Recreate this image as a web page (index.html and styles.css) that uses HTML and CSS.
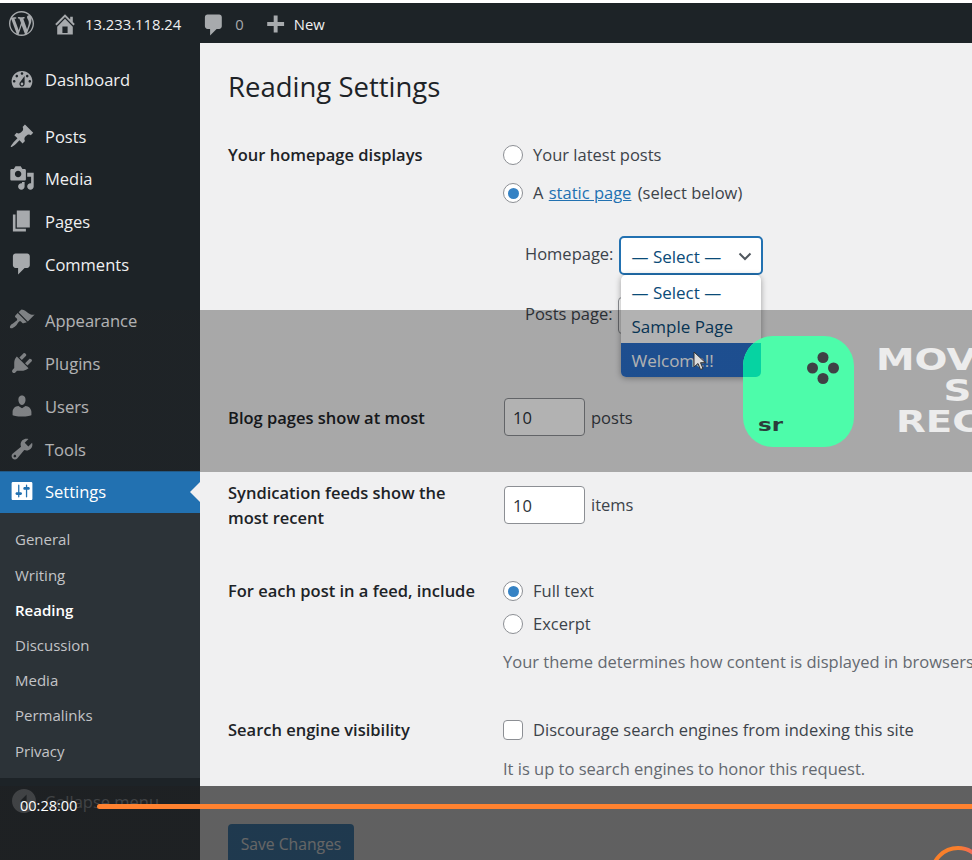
FILE: index.html
```html
<!DOCTYPE html>
<html lang="en">
<head>
    <meta charset="UTF-8">
    <meta name="viewport" content="width=device-width, initial-scale=1.0">
    <title>Reading Settings</title>
    <link rel="stylesheet" href="styles.css">
</head>
<body>
<div id="screen">
    <div id="adminbar">
        <svg class="bar-logo" viewBox="0 0 20 20"><path d="M20 10c0-5.51-4.49-10-10-10C4.48 0 0 4.49 0 10c0 5.52 4.48 10 10 10 5.51 0 10-4.48 10-10zM7.78 15.37L4.37 6.22c.55-.02 1.17-.08 1.17-.08.5-.06.44-1.13-.06-1.11 0 0-1.45.11-2.37.11-.18 0-.37 0-.58-.01C4.12 2.69 6.87 1.11 10 1.11c2.33 0 4.45.87 6.05 2.34-.68-.11-1.65.39-1.65 1.58 0 .74.45 1.36.9 2.1.35.61.55 1.36.55 2.46 0 1.49-1.4 5-1.4 5l-3.03-8.37c.54-.02.82-.17.82-.17.5-.05.44-1.25-.06-1.22 0 0-1.44.12-2.38.12-.87 0-2.33-.12-2.33-.12-.5-.03-.56 1.2-.06 1.22l.92.08 1.26 3.41zM17.41 10c.24-.64.74-1.87.43-4.25.7 1.29 1.05 2.71 1.05 4.25 0 3.29-1.73 6.24-4.4 7.78.97-2.59 1.94-5.2 2.92-7.78zM6.1 18.09C3.12 16.65 1.11 13.53 1.11 10c0-1.3.23-2.48.72-3.59C3.25 10.3 4.67 14.2 6.1 18.09zm4.03-6.63l2.58 6.98c-.86.29-1.76.45-2.71.45-.79 0-1.57-.11-2.29-.33.81-2.38 1.62-4.74 2.42-7.1z"/></svg>
        <svg class="bar-icon bar-home" viewBox="0 0 20 20"><path d="M16 8.5l1.53 1.53-1.06 1.06L10 4.62l-6.47 6.47-1.06-1.06L10 2.5l4 4v-2h2v4zm-6-2.46l6 5.99V18H4v-5.97zM12 17v-5H8v5h4z"/></svg>
        <span class="bar-text bar-site">13.233.118.24</span>
        <svg class="bar-icon bar-comments" viewBox="0 0 20 20"><path d="M5 2h9c1.1 0 2 .9 2 2v7c0 1.1-.9 2-2 2h-2l-5 5v-5H5c-1.1 0-2-.9-2-2V4c0-1.1.9-2 2-2z"/></svg>
        <span class="bar-count">0</span>
        <svg class="bar-icon bar-plus" viewBox="0 0 20 20"><path d="M17 7v3h-5v5H9v-5H4V7h5V2h3v5h5z"/></svg>
        <span class="bar-text">New</span>
    </div>

    <div id="wrap">
        <nav id="sidebar">
            <a class="menu-item menu-nudge"><svg viewBox="0 0 20 20"><path d="M3.76 16h12.48c1.1-1.37 1.76-3.11 1.76-5 0-4.42-3.58-8-8-8s-8 3.58-8 8c0 1.89.66 3.63 1.76 5zM10 4c.55 0 1 .45 1 1s-.45 1-1 1-1-.45-1-1 .45-1 1-1zM6 6c.55 0 1 .45 1 1s-.45 1-1 1-1-.45-1-1 .45-1 1-1zm8 0c.55 0 1 .45 1 1s-.45 1-1 1-1-.45-1-1 .45-1 1-1zm-5.37 5.55L12 7v6c0 1.1-.9 2-2 2s-2-.9-2-2c0-.57.24-1.08.63-1.45zM4 10c.55 0 1 .45 1 1s-.45 1-1 1-1-.45-1-1 .45-1 1-1zm12 0c.55 0 1 .45 1 1s-.45 1-1 1-1-.45-1-1 .45-1 1-1zm-5 3c0-.55-.45-1-1-1s-1 .45-1 1 .45 1 1 1 1-.45 1-1z"/></svg>Dashboard</a>
            <a class="menu-item menu-gap menu-nudge"><svg viewBox="0 0 20 20"><path d="M10.44 3.02l1.82-1.82 6.36 6.35-1.83 1.82c-1.05-.68-2.48-.57-3.41.36l-.75.75c-.92.93-1.04 2.35-.35 3.41l-1.83 1.82-2.41-2.41-2.8 2.79c-.42.42-3.38 2.71-3.8 2.29s1.86-3.39 2.28-3.81l2.79-2.79L4.1 9.36l1.83-1.82c1.05.69 2.48.57 3.4-.36l.75-.75c.93-.92 1.05-2.35.36-3.41z"/></svg>Posts</a>
            <a class="menu-item"><svg viewBox="0 0 20 20"><path d="M13 11V4c0-.55-.45-1-1-1h-1.67L9 1H5L3.67 3H2c-.55 0-1 .45-1 1v7c0 .55.45 1 1 1h10c.55 0 1-.45 1-1zM7 4.5c1.38 0 2.5 1.12 2.5 2.5S8.38 9.5 7 9.5 4.5 8.38 4.5 7 5.62 4.5 7 4.5zM14 6h5v10.5c0 1.38-1.12 2.5-2.5 2.5S14 17.88 14 16.5s1.12-2.5 2.5-2.5c.17 0 .34.02.5.05V9h-3V6zm-4 8.05V13h2v3.5c0 1.38-1.12 2.5-2.5 2.5S7 17.88 7 16.5 8.12 14 9.5 14c.17 0 .34.02.5.05z"/></svg>Media</a>
            <a class="menu-item"><svg viewBox="0 0 20 20"><path d="M6 15V2h10v13H6zm-1 1h8v2H3V5h2v11z"/></svg>Pages</a>
            <a class="menu-item"><svg viewBox="0 0 20 20"><path d="M5 2h9c1.1 0 2 .9 2 2v7c0 1.1-.9 2-2 2h-2l-5 5v-5H5c-1.1 0-2-.9-2-2V4c0-1.1.9-2 2-2z"/></svg>Comments</a>
            <a class="menu-item menu-gap"><svg viewBox="0 0 20 20"><path d="M14.48 11.06L7.41 3.99l1.5-1.5c.5-.56 2.3-.47 3.51.32 1.21.8 1.43 1.28 2.91 2.1 1.18.64 2.45 1.26 4.45.85zm-.71.71L6.7 4.7 4.93 6.47c-.39.39-.39 1.02 0 1.41l1.06 1.06c.39.39.39 1.03 0 1.42-.6.6-1.43 1.11-2.21 1.69-.35.26-.7.53-1.01.84C1.43 13.23.18 15.33 1 16.15c.82.82 2.92-.43 4.26-1.77.31-.31.58-.66.84-1.01.58-.78 1.09-1.61 1.69-2.21.39-.39 1.02-.39 1.41 0l1.06 1.06c.39.39 1.02.39 1.41 0z"/></svg>Appearance</a>
            <a class="menu-item"><svg viewBox="0 0 20 20"><path d="M13.11 4.36L9.87 7.6 8 5.73l3.24-3.24c.35-.34 1.05-.2 1.56.32.52.51.66 1.21.31 1.55zm-8 1.77l.91-1.12 9.01 9.01-1.19.84c-.71.71-2.63 1.16-3.82 1.16H6.14L4.9 17.26c-.59.59-1.54.59-2.12 0-.59-.58-.59-1.53 0-2.12l1.24-1.24v-3.88c0-1.13.4-3.19 1.09-3.89zm7.26 3.97l3.24-3.24c.34-.35 1.04-.21 1.55.31.52.51.66 1.21.31 1.55l-3.24 3.25z"/></svg>Plugins</a>
            <a class="menu-item"><svg viewBox="0 0 20 20"><path d="M10 9.25c-2.27 0-2.73-3.44-2.73-3.44C7 4.02 7.82 2 9.97 2c2.16 0 2.98 2.02 2.71 3.81 0 0-.41 3.44-2.68 3.44zm0 2.57L12.72 10c2.39 0 4.52 2.33 4.52 4.53v2.49s-3.65 1.13-7.24 1.13c-3.65 0-7.24-1.13-7.24-1.13v-2.49c0-2.25 1.94-4.48 4.47-4.48z"/></svg>Users</a>
            <a class="menu-item"><svg viewBox="0 0 20 20"><path d="M16.68 9.77c-1.34 1.34-3.3 1.67-4.95.99l-5.41 6.52c-.99.99-2.59.99-3.58 0s-.99-2.59 0-3.57l6.52-5.42c-.68-1.65-.35-3.61.99-4.95 1.28-1.28 3.12-1.62 4.72-1.06l-2.89 2.89 2.82 2.82 2.86-2.87c.53 1.58.18 3.39-1.08 4.65zM3.81 16.21c.4.39 1.04.39 1.43 0 .4-.4.4-1.04 0-1.43-.39-.4-1.03-.4-1.43 0-.39.39-.39 1.03 0 1.43z"/></svg>Tools</a>
            <a class="menu-item menu-current"><svg viewBox="0 0 20 20"><path d="M18 16V4c0-.55-.45-1-1-1H3c-.55 0-1 .45-1 1v12c0 .55.45 1 1 1h14c.55 0 1-.45 1-1zM8 11h1c.55 0 1 .45 1 1s-.45 1-1 1H8v1.5c0 .28-.22.5-.5.5s-.5-.22-.5-.5V13H6c-.55 0-1-.45-1-1s.45-1 1-1h1V5.5c0-.28.22-.5.5-.5s.5.22.5.5V11zm5-2h-1c-.55 0-1-.45-1-1s.45-1 1-1h1V5.5c0-.28.22-.5.5-.5s.5.22.5.5V7h1c.55 0 1 .45 1 1s-.45 1-1 1h-1v5.5c0 .28-.22.5-.5.5s-.5-.22-.5-.5V9z"/></svg>Settings</a>
            <div class="submenu">
                <a>General</a>
                <a>Writing</a>
                <a class="sub-current">Reading</a>
                <a>Discussion</a>
                <a>Media</a>
                <a>Permalinks</a>
                <a>Privacy</a>
            </div>
            <a class="menu-item menu-collapse"><svg viewBox="0 0 20 20"><path d="M10 .8c5.1 0 9.2 4.1 9.2 9.2s-4.1 9.2-9.2 9.2S.8 15.1.8 10 4.9.8 10 .8zm2 4.2l-5 5 5 5z"/></svg>Collapse menu</a>
        </nav>

        <main id="content">
            <h1>Reading Settings</h1>

            <div class="row row-front">
                <div class="row-label">Your homepage displays</div>
                <div class="row-field">
                    <label class="choice"><input type="radio" name="front">Your latest posts</label>
                    <label class="choice choice-next"><input type="radio" name="front" checked><span>A <a href="#">static page</a> (select below)</span></label>
                    <div class="page-line page-line-home">
                        <span>Homepage:</span>
                        <div class="select-box">
                            — Select —
                            <svg class="chevron" viewBox="0 0 16 16"><path d="M2.5 5.5L8 11l5.5-5.5"/></svg>
                            <ul class="select-list">
                                <li>— Select —</li>
                                <li>Sample Page</li>
                                <li class="picked">Welcome!!</li>
                            </ul>
                        </div>
                    </div>
                    <div class="page-line page-line-posts">
                        <span>Posts page:</span>
                        <div class="select-closed"></div>
                    </div>
                </div>
            </div>

            <div class="row row-blog">
                <div class="row-label">Blog pages show at most</div>
                <div class="row-field inline-field"><input class="num" type="text" value="10"> <span class="unit">posts</span></div>
            </div>

            <div class="row row-feeds">
                <div class="row-label label-wrap">Syndication feeds show the most recent</div>
                <div class="row-field inline-field feeds-field"><input class="num" type="text" value="10"> items</div>
            </div>

            <div class="row row-include">
                <div class="row-label">For each post in a feed, include</div>
                <div class="row-field">
                    <label class="choice"><input type="radio" name="feed" checked>Full text</label>
                    <label class="choice choice-close"><input type="radio" name="feed">Excerpt</label>
                    <p class="desc">Your theme determines how content is displayed in browsers. Learn more about feeds.</p>
                </div>
            </div>

            <div class="row row-search">
                <div class="row-label">Search engine visibility</div>
                <div class="row-field">
                    <label class="choice"><input type="checkbox">Discourage search engines from indexing this site</label>
                    <p class="desc desc-far">It is up to search engines to honor this request.</p>
                </div>
            </div>

            <button class="save">Save Changes</button>
        </main>
    </div>

    <!-- screen recorder stuff sitting on top of the page -->
    <div class="band band-promo"></div>
    <div class="band band-player"></div>

    <div class="promo-tile">
        <div class="tile-overlap"></div>
        <svg class="tile-dots" viewBox="0 0 32 32"><circle cx="16" cy="5.5" r="5.5"/><circle cx="5.5" cy="16" r="5.5"/><circle cx="26.5" cy="16" r="5.5"/><circle cx="16" cy="26.5" r="5.5"/></svg>
        <span class="tile-text">sr</span>
    </div>
    <div class="promo-title">
        <div class="promo-line-1">MOVAVI</div>
        <div class="promo-line-2">SCREEN</div>
        <div class="promo-line-3">RECORDER</div>
    </div>

    <svg class="cursor" viewBox="0 0 14 20"><path d="M1 1v15l4-3.5 2.5 6 2.5-1-2.5-5.8h5z"/></svg>

    <div class="timecode">00:28:00</div>
    <div class="progress"></div>
    <svg class="record-ring" viewBox="0 0 60 60"><defs><linearGradient id="ring" x1="0" x2="1"><stop offset="0.5" stop-color="#f97f2a"/><stop offset="0.9" stop-color="#ee5f6e"/></linearGradient></defs><circle cx="30" cy="30" r="26" fill="none" stroke="url(#ring)" stroke-width="4"/></svg>
</div>
</body>
</html>
```

FILE: styles.css
```css
* {
    box-sizing: border-box;
}

html, body {
    margin: 0;
    height: 100%;
}

body {
    font-family: "Open Sans", "Noto Sans", sans-serif;
    font-size: 16.5px;
    color: #3c434a;
    background: #fff;
    overflow: hidden;
}

#screen {
    position: relative;
    width: 972px;
    height: 860px;
    padding-top: 3px;
    overflow: hidden;
}

/* top bar */
#adminbar {
    display: flex;
    align-items: center;
    height: 40px;
    background: #1d2327;
    color: #f0f0f1;
    padding-left: 9px;
    font-size: 14.8px;
}

#adminbar svg {
    fill: #a7aaad;
    flex: none;
}

.bar-text {
    padding-top: 2px;
}

.bar-logo {
    width: 25px;
    height: 25px;
}

.bar-icon {
    width: 26px;
    height: 26px;
}

.bar-home {
    margin-left: 18px;
    margin-top: 2px;
}

.bar-site {
    margin-left: 7px;
}

.bar-comments {
    margin-left: 20px;
    margin-top: 3px;
}

.bar-count {
    margin-left: 8px;
    padding-top: 2px;
    color: #a7aaad;
}

.bar-plus {
    margin-left: 18px;
    margin-right: 6px;
    margin-top: 6px;
}

/* left menu */
#wrap {
    display: flex;
    height: 817px;
}

#sidebar {
    width: 200px;
    flex: none;
    background: #1d2327;
    padding-top: 14.5px;
}

.menu-item {
    display: flex;
    align-items: center;
    height: 42.9px;
    padding-left: 9px;
    color: #f0f0f1;
    font-size: 16.5px;
    position: relative;
}

.menu-nudge {
    padding-top: 2px;
}

.menu-item svg {
    width: 26px;
    height: 26px;
    margin-right: 10px;
    fill: #a7aaad;
    flex: none;
}

.menu-gap {
    margin-top: 13.5px;
}

.menu-current {
    background: #2271b1;
    color: #fff;
    height: 42.4px;
    padding-bottom: 1px;
}

.menu-current svg {
    fill: #fff;
}

.menu-current::after {
    content: "";
    position: absolute;
    right: 0;
    top: 11px;
    border: 10px solid transparent;
    border-right-color: #f0f0f1;
    border-left-width: 0;
}

.submenu {
    background: #2c3338;
    height: 265px;
    padding-top: 9.5px;
}

.submenu a {
    display: block;
    height: 35.2px;
    line-height: 35.2px;
    padding-left: 15px;
    font-size: 15px;
    color: #c3c4c7;
}

.submenu .sub-current {
    color: #fff;
    font-weight: 600;
}

.menu-collapse {
    margin-top: 2px;
    color: #a7aaad;
}

.menu-collapse svg {
    margin-left: 2px;
    margin-right: 8px;
}

/* main part */
#content {
    flex: 1;
    min-width: 0;
    background: #f0f0f1;
    padding-left: 28px;
    white-space: nowrap;
}

h1 {
    margin: 24px 0 36px;
    font-size: 27.5px;
    line-height: 40px;
    font-weight: 400;
    color: #1d2327;
}

.row {
    display: flex;
    line-height: 24px;
}

.row-label {
    width: 275px;
    flex: none;
    font-weight: 600;
    color: #1d2327;
}

.label-wrap {
    width: 240px;
    margin-top: -1px;
    margin-right: 35px;
    white-space: normal;
    line-height: 25px;
}

.row-blog {
    margin-top: 64px;
    align-items: center;
}

.row-blog .row-label, .unit {
    padding-top: 2px;
}

.row-feeds {
    margin-top: 45px;
}

.row-include {
    margin-top: 49px;
}

.row-search {
    margin-top: 44px;
}

.choice {
    display: flex;
    align-items: center;
    gap: 10px;
}

.choice-next {
    margin-top: 14px;
}

.choice-close {
    margin-top: 9px;
}

.choice a {
    margin: 0 2px 0 1px;
    color: #2271b1;
}

.choice input {
    appearance: none;
    width: 20px;
    height: 20px;
    margin: 0;
    flex: none;
    background: #fff;
    border: 1px solid #8c8f94;
    display: flex;
    align-items: center;
    justify-content: center;
}

.choice input[type="radio"] {
    border-radius: 50%;
}

.choice input[type="checkbox"] {
    border-radius: 4px;
}

.choice input:checked::before {
    content: "";
    width: 11px;
    height: 11px;
    border-radius: 50%;
    background: #3582c4;
}

.page-line {
    display: flex;
    align-items: center;
    gap: 6px;
    padding-left: 22px;
}

.page-line span {
    margin-bottom: 4px;
}

.page-line-home {
    margin-top: 32px;
}

.page-line-posts {
    margin-top: 23px;
    gap: 5px;
}

.select-box {
    position: relative;
    width: 144px;
    height: 39px;
    margin: -1px 0;
    line-height: 37px;
    padding-left: 10px;
    font-size: 17px;
    color: #0a4b78;
    background: #fff;
    border: 2px solid #2271b1;
    border-radius: 5px;
}

.chevron {
    position: absolute;
    right: 8px;
    top: 10px;
    width: 16px;
    height: 16px;
    fill: none;
    stroke: #50575e;
    stroke-width: 2;
}

.select-list {
    position: absolute;
    left: 0;
    top: 37px;
    width: 140px;
    margin: 0;
    padding: 0;
    list-style: none;
    background: #fff;
    border-radius: 5px;
    box-shadow: 0 1px 6px rgba(0, 0, 0, 0.35);
    overflow: hidden;
}

.select-list li {
    height: 34px;
    line-height: 36px;
    padding-left: 10px;
}

.select-list .picked {
    background: #2a70cd;
    color: #fff;
}

.select-closed {
    width: 142px;
    height: 37px;
    background: #fff;
    border: 1px solid #8c8f94;
    border-radius: 4px;
}

.inline-field {
    display: flex;
    align-items: center;
    gap: 6px;
}

.feeds-field {
    align-self: flex-start;
    margin-top: 5px;
}

.num {
    width: 81px;
    height: 38px;
    margin-left: 1px;
    padding: 0 8px;
    font: inherit;
    color: #2c3338;
    background: #fff;
    border: 1px solid #8c8f94;
    border-radius: 4px;
}

.desc {
    margin: 14px 0 0;
    color: #646970;
}

.desc-far {
    margin-top: 15px;
}

.save {
    display: block;
    margin-top: 43px;
    width: 126px;
    height: 40px;
    font: inherit;
    font-size: 15.7px;
    color: #fff;
    background: #4d8fc4;
    border: 0;
    border-radius: 4px;
}

/* overlay from the screen recorder */
.band {
    position: absolute;
    left: 0;
    width: 972px;
}

.band-promo {
    top: 310px;
    height: 162px;
    background: linear-gradient(to right, rgba(34, 36, 38, 0.3) 200px, rgba(0, 0, 0, 0.3) 200px);
}

.band-player {
    top: 786px;
    height: 74px;
    background: linear-gradient(to right, rgba(30, 32, 34, 0.75) 200px, rgba(0, 0, 0, 0.6) 200px);
}

.promo-tile {
    position: absolute;
    left: 743px;
    top: 336px;
    width: 111px;
    height: 111px;
    border-radius: 30px;
    background: #4dfcaa;
    overflow: hidden;
}

.tile-overlap {
    position: absolute;
    left: 0;
    top: 7px;
    width: 18px;
    height: 34px;
    background: #06d3a2;
    border-bottom-right-radius: 5px;
}

.tile-dots {
    position: absolute;
    left: 64px;
    top: 16px;
    width: 32px;
    height: 32px;
    fill: #3f4145;
}

.tile-text {
    position: absolute;
    left: 15px;
    top: 78px;
    font-family: "DejaVu Sans", sans-serif;
    font-size: 17px;
    font-weight: 700;
    line-height: 22px;
    color: #2b3d3a;
    transform: scaleX(1.35);
    transform-origin: left;
}

.promo-title {
    position: absolute;
    left: 876px;
    top: 344px;
    font-family: "DejaVu Sans", sans-serif;
    font-size: 31px;
    font-weight: 700;
    line-height: 31px;
    color: #ececec;
    white-space: nowrap;
    transform: scaleX(1.25);
    transform-origin: left;
}

.promo-line-2 {
    margin-left: 54px;
}

.promo-line-3 {
    margin-left: 16px;
}

.cursor {
    position: absolute;
    left: 693px;
    top: 351px;
    width: 14px;
    height: 20px;
    fill: #ddd;
    stroke: #333;
    stroke-width: 1;
}

.timecode {
    position: absolute;
    left: 20px;
    top: 796px;
    font-size: 14.5px;
    line-height: 20px;
    color: #fff;
}

.progress {
    position: absolute;
    left: 97px;
    top: 804px;
    width: 875px;
    height: 5px;
    background: #ff8230;
    border-radius: 3px 0 0 3px;
}

.record-ring {
    position: absolute;
    left: 928px;
    top: 844px;
    width: 60px;
    height: 60px;
}
```
